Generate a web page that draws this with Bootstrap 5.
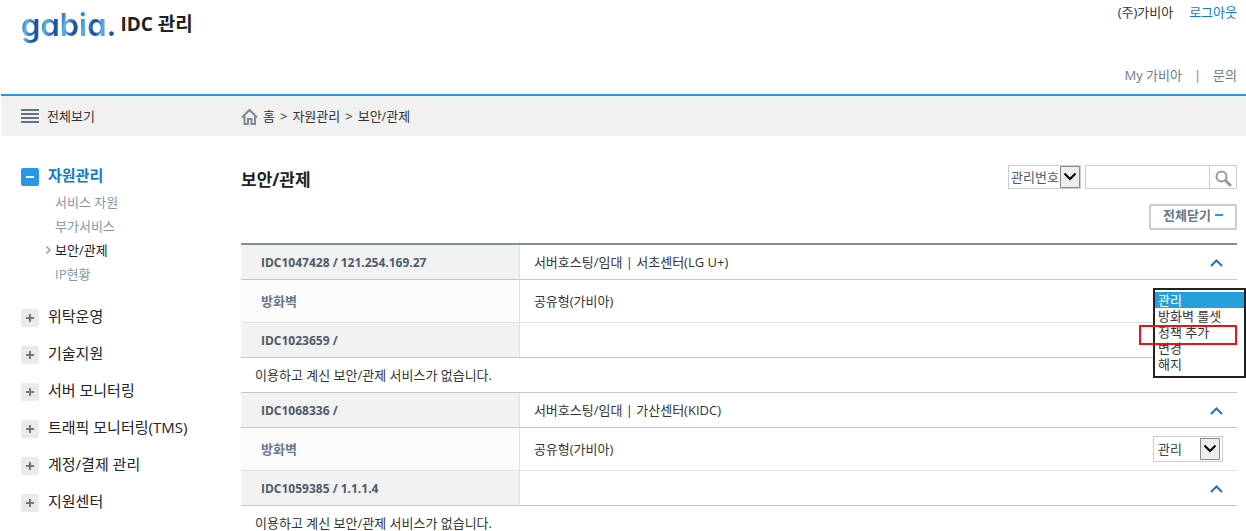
<!DOCTYPE html>
<html lang="ko">
<head>
<meta charset="utf-8">
<meta name="viewport" content="width=device-width, initial-scale=1">
<title>gabia. IDC 관리</title>
<link href="https://cdn.jsdelivr.net/npm/bootstrap@5.3.0/dist/css/bootstrap.min.css" rel="stylesheet">
<style>
  html { scrollbar-width: none; }
  body { font: 13px/20px "Open Sans", "Noto Sans CJK KR", sans-serif; color: #333; padding-left: 1px; }
  a { text-decoration: none; color: inherit; }
  .site-head { height: 94px; padding: 2px 9px 9px 20px; }
  .brand-logo { font: 600 31px/46px Inter, sans-serif; font-feature-settings: "cv11"; color: transparent;
    background: repeating-linear-gradient(100deg, #1c57a5 0 3px, #5cb3e4 9px, #3a7fc4 14px, #174f9f 19px); -webkit-background-clip: text; background-clip: text; }
  .brand-name { font-size: 19px; line-height: 44px; font-weight: 700; color: #222; }
  .link-blue { color: #0b7bcf; }
  .head-links { color: #6b7a8b; gap: 12px; }
  .crumb-bar { height: 42px; border-top: 2px solid #2797e8; background: #f1f1f1; padding: 0 9px 0 20px; }
  .side-col { width: 220px; flex: none; }
  .all-menu svg { margin-right: 8px; }
  .crumb { color: #333; gap: 5px; }
  .page-body { padding: 29px 9px 0 20px; }
  .side-head { font-size: 15px; line-height: 20px; color: #222; gap: 9px; height: 22px; }
  .side-head.is-open { font-weight: 700; color: #0b7bcf; }
  .side-list > li { margin-bottom: 15px; }
  .sq { width: 18px; height: 18px; background: #e9eaec; border-radius: 2px; margin-top: 3px; }
  .is-open .sq { background: #2797e8; }
  .sub-menu { padding: 3px 0 20px 34px; margin: 0; color: #8696a6; line-height: 24px; }
  .sub-menu .is-here { color: #222; position: relative; }
  .sub-menu .is-here svg { position: absolute; left: -9px; top: 8px; }
  h1 { font-size: 17px; line-height: 24px; font-weight: 700; color: #222; margin: 3px 0 0; }
  .drop { appearance: none; color: #4e5b69; border: 1px solid #ccc; border-radius: 0; background: #fff no-repeat right 0 center;
    background-image: url("data:image/svg+xml,%3Csvg xmlns='http://www.w3.org/2000/svg' width='20' height='22'%3E%3Cpath d='M.5 .5h19v21h-19z' fill='%23eee' stroke='%23888'/%3E%3Cpath d='M4.500 7.500l5.500 5.500 5.500-5.500' fill='none' stroke='%23000' stroke-width='2'/%3E%3C/svg%3E"); }
  .drop-search { width: 73px; height: 24px; padding: 0 0 0 2px; }
  .drop-row { width: 70px; height: 26px; padding: 0 0 0 4px; background-position: right 2px center; color: #444; }
  .search-box { width: 152px; height: 24px; border: 1px solid #ccc; }
  .search-box input { border: 0; min-width: 0; padding: 0 4px; }
  .search-box button { border: 0; border-left: 1px solid #ccc; background: #fff; width: 27px; flex: none; padding: 0; }
  .btn-fold { height: 26px; border: 2px solid #ccc; border-radius: 2px; background: #fff; font-weight: 700; font-size: 13px; line-height: 18px; color: #66788a; padding: 0; margin: 12px 0 13px; gap: 4px; width: 88px; white-space: nowrap; }
  .svc { width: 100%; table-layout: fixed; border-top: 2px solid #7b8fa0; border-collapse: separate; border-spacing: 0; }
  .svc th, .svc td { height: 35px; border-bottom: 1px solid #c6c6c6; padding: 0 14px; font-weight: 400; }
  .svc th { width: 28%; background: #f2f2f2; color: #4e5b69; font-size: 12px; font-weight: 700; padding: 2px 14px 0 20px; border-right: 1px solid #e2e2e2; }
  .svc .svc-item > * { height: 43px; border-bottom-color: #e2e2e2; }
  .svc .svc-item th { background: #fbfbfb; color: #66788a; font-size: 13px; padding-top: 0; }
  .fold-btn { border: 0; background: none; padding: 0; width: 13px; height: 20px; line-height: 1; display: block; }
  .menu-open { position: relative; width: 84px; height: 26px; }
  .menu-list { position: absolute; left: 0; top: 0; z-index: 2; width: 93px; height: 90px; border: 2px solid #222; border-radius: 0; background: #fff; padding: 2px 0; overflow: hidden; outline: 0; scrollbar-width: none; }
  .menu-list option { display: flex; align-items: center; height: 16px; min-height: 16px; padding: 0 3px 2px; font-size: 13px; color: #333; }
  .menu-list option:checked { background: #26a0da linear-gradient(#26a0da, #26a0da); color: #fff; }
  .hot-box { position: absolute; left: -14px; top: 37px; z-index: 3; width: 98px; height: 20px; border: 2px solid #ee1111; pointer-events: none; }
</style>
</head>
<body>
<header class="site-head d-flex justify-content-between">
  <a href="#" class="d-flex align-items-start">
    <span class="brand-logo">gabia.</span>
    <span class="brand-name ms-1">IDC 관리</span>
  </a>
  <div class="d-flex flex-column justify-content-between align-items-end">
    <div class="d-flex gap-3"><span>(주)가비아</span><a href="#" class="link-blue">로그아웃</a></div>
    <nav class="head-links d-flex"><a href="#">My 가비아</a><span>|</span><a href="#">문의</a></nav>
  </div>
</header>

<div class="crumb-bar d-flex align-items-center">
  <a href="#" class="all-menu side-col d-flex align-items-center">
    <svg width="18" height="14" fill="#66727e"><path d="M0 0h18v2H0zM0 4h18v2H0zM0 8h18v2H0zM0 12h18v2H0z"/></svg>전체보기</a>
  <nav class="crumb d-flex align-items-center" aria-label="위치">
    <svg width="17" height="17" fill="none" stroke="#808a94" stroke-width="2"><path d="M1 9.500L8.500 2 16 9.500M3.500 8v8H7v-5h3.500v5h3.500V8"/></svg>
    <a href="#">홈</a><span>&gt;</span><a href="#">자원관리</a><span>&gt;</span><a href="#">보안/관제</a>
  </nav>
</div>

<div class="page-body d-flex">
  <nav class="side-col">
    <ul class="side-list list-unstyled mb-0">
      <li class="mb-0">
        <a href="#" class="side-head is-open d-flex"><span class="sq d-flex"><svg class="m-auto" width="8" height="8"><path d="M0 3h8v2H0z" fill="#fff"/></svg></span>자원관리</a>
        <ul class="sub-menu list-unstyled">
          <li><a href="#">서비스 자원</a></li>
          <li><a href="#">부가서비스</a></li>
          <li class="is-here"><svg width="5" height="8" fill="none" stroke="#999" stroke-width="1.500"><path d="M.5 .5L4 4 .5 7.500"/></svg><a href="#">보안/관제</a></li>
          <li><a href="#">IP현황</a></li>
        </ul>
      </li>
      <li><a href="#" class="side-head d-flex"><span class="sq d-flex"><svg class="m-auto" width="8" height="8"><path d="M0 3h3V0h2v3h3v2H5v3H3V5H0z" fill="#777"/></svg></span>위탁운영</a></li>
      <li><a href="#" class="side-head d-flex"><span class="sq d-flex"><svg class="m-auto" width="8" height="8"><path d="M0 3h3V0h2v3h3v2H5v3H3V5H0z" fill="#777"/></svg></span>기술지원</a></li>
      <li><a href="#" class="side-head d-flex"><span class="sq d-flex"><svg class="m-auto" width="8" height="8"><path d="M0 3h3V0h2v3h3v2H5v3H3V5H0z" fill="#777"/></svg></span>서버 모니터링</a></li>
      <li><a href="#" class="side-head d-flex"><span class="sq d-flex"><svg class="m-auto" width="8" height="8"><path d="M0 3h3V0h2v3h3v2H5v3H3V5H0z" fill="#777"/></svg></span>트래픽 모니터링(TMS)</a></li>
      <li><a href="#" class="side-head d-flex"><span class="sq d-flex"><svg class="m-auto" width="8" height="8"><path d="M0 3h3V0h2v3h3v2H5v3H3V5H0z" fill="#777"/></svg></span>계정/결제 관리</a></li>
      <li><a href="#" class="side-head d-flex"><span class="sq d-flex"><svg class="m-auto" width="8" height="8"><path d="M0 3h3V0h2v3h3v2H5v3H3V5H0z" fill="#777"/></svg></span>지원센터</a></li>
    </ul>
  </nav>

  <main class="flex-grow-1">
    <div class="d-flex justify-content-between align-items-start">
      <h1>보안/관제</h1>
      <form class="d-flex gap-1">
        <select class="drop drop-search" aria-label="검색 기준"><option>관리번호</option></select>
        <div class="search-box d-flex">
          <input type="text" class="flex-grow-1" aria-label="검색어">
          <button type="button" aria-label="검색"><svg width="17" height="17" fill="none" stroke="#999" stroke-width="2"><circle cx="6.500" cy="6.500" r="5"/><path d="M10 10l6 6" stroke-width="3"/></svg></button>
        </div>
      </form>
    </div>
    <button type="button" class="btn-fold d-flex justify-content-center ms-auto">전체닫기<svg width="8" height="18"><path d="M0 8h8v2H0z" fill="#2797e8"/></svg></button>

    <table class="svc">
      <tr><th scope="row">IDC1047428 / 121.254.169.27</th>
        <td><div class="d-flex justify-content-between"><span>서버호스팅/임대 | 서초센터(LG U+)</span><button type="button" class="fold-btn" aria-label="접기"><svg width="13" height="8" fill="none" stroke="#0b7bcf" stroke-width="2"><path d="M1 7l5.500-5.500L12 7"/></svg></button></div></td></tr>
      <tr class="svc-item"><th scope="row">방화벽</th>
        <td class="pe-0"><div class="d-flex justify-content-between align-items-center"><span>공유형(가비아)</span>
          <div class="menu-open">
            <select class="menu-list" size="5" aria-label="방화벽 관리">
              <option selected>관리</option><option>방화벽 룰셋</option><option>정책 추가</option><option>변경</option><option>해지</option>
            </select>
            <div class="hot-box"></div>
          </div></div></td></tr>
      <tr><th scope="row">IDC1023659 /</th><td></td></tr>
      <tr><td colspan="2">이용하고 계신 보안/관제 서비스가 없습니다.</td></tr>
      <tr><th scope="row">IDC1068336 /</th>
        <td><div class="d-flex justify-content-between"><span>서버호스팅/임대 | 가산센터(KIDC)</span><button type="button" class="fold-btn" aria-label="접기"><svg width="13" height="8" fill="none" stroke="#0b7bcf" stroke-width="2"><path d="M1 7l5.500-5.500L12 7"/></svg></button></div></td></tr>
      <tr class="svc-item"><th scope="row">방화벽</th>
        <td><div class="d-flex justify-content-between align-items-center"><span>공유형(가비아)</span><select class="drop drop-row" aria-label="방화벽 관리"><option>관리</option></select></div></td></tr>
      <tr><th scope="row">IDC1059385 / 1.1.1.4</th>
        <td><div class="d-flex justify-content-end"><button type="button" class="fold-btn" aria-label="접기"><svg width="13" height="8" fill="none" stroke="#0b7bcf" stroke-width="2"><path d="M1 7l5.500-5.500L12 7"/></svg></button></div></td></tr>
      <tr><td colspan="2">이용하고 계신 보안/관제 서비스가 없습니다.</td></tr>
    </table>
  </main>
</div>
<script src="https://cdn.jsdelivr.net/npm/bootstrap@5.3.0/dist/js/bootstrap.bundle.min.js"></script>
</body>
</html>
